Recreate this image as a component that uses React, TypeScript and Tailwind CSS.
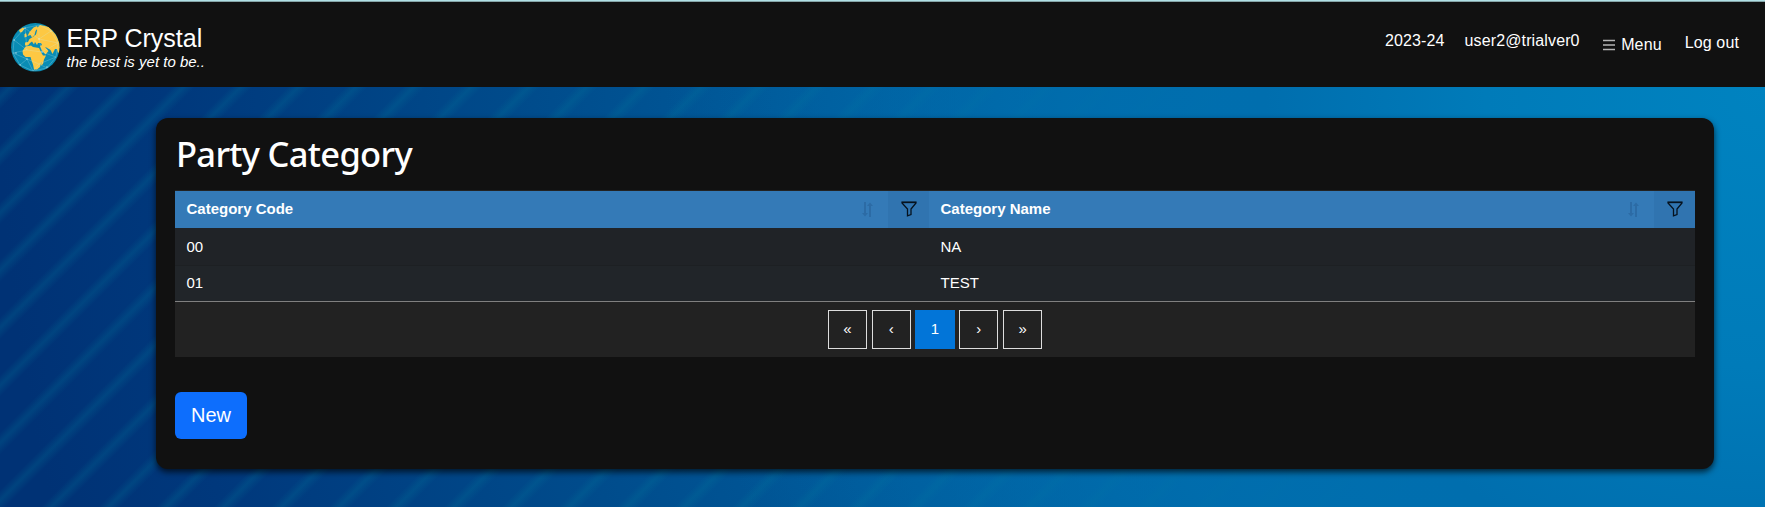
import React from "react";

function Globe() {
  return (
    <svg width="50" height="50" viewBox="0 0 50 50" className="mt-[21px] shrink-0">
      <defs>
        <clipPath id="globe"><circle cx="24.3" cy="24.3" r="24.2" /></clipPath>
      </defs>
      <g clipPath="url(#globe)">
        <rect width="50" height="50" fill="#0a8cb4" />
        <g fill="#fdc843">
          <path d="M8 7l4-2.500 1.500 1L11 9 9 9.500z" />
          <path d="M16.500 13l2-4 4-4.500 3.500-1.500 1 2-2.500 3-1 4-2.500 2.500-1.500-2.500z" />
          <path d="M26 5l3-3 9 2 7 8 4 9v7l-2 2-1-4-2 0-2.500 5-2-4-3-2-2.500-1 3.500 4-3 3.500-3.500-4-2-4.500 2-1-1-2-3 0-1 2-2-3-1 2.500-2-3-2 1.500-2 2.500-3 0 0-3 3-.500 1.500-3 4-2.500 2.500-2 1-4z" />
          <path d="M13.500 11.500l1.500-1.500 1 3.500-2.500 1z" />
          <path d="M11.500 28l3-4.500 5.500-1 2 1.500 6 1 2.500 5 1.500 2.500 3 0-2 4-3 3.500-1 4-3 2.500h-3l-1-5-1.500-4-1-3.500-5 0-2.500-2.500z" />
          <path d="M30.500 38l2.500-2-1 5-2 1.500z" />
          <path d="M45 43l1.500-4 1 1z" />
        </g>
        <g fill="none" stroke="#c9eef2" strokeWidth=".45" opacity=".55">
          <path d="M3 17L14 5 28 2 40 8 47 20 45 34 36 45 22 48 9 42 2 30zM3 17l13 10L14 5l14 11L28 2M16 27L2 30l14 6 6 12M28 16l19 4-16 9-15-2M31 29l14 5-17 7-6 7M16 36l12 5 8 4M40 8L28 16l3 13M9 42l7-6" />
        </g>
        <g fill="#e5fafa" opacity=".75">
          <circle cx="14" cy="5" r=".7" /><circle cx="3" cy="17" r=".7" /><circle cx="16" cy="36" r=".7" />
          <circle cx="28" cy="16" r=".7" /><circle cx="31" cy="29" r=".7" /><circle cx="9" cy="42" r=".7" />
          <circle cx="5" cy="30" r=".7" /><circle cx="36" cy="44" r=".7" /><circle cx="40" cy="8" r=".6" />
        </g>
      </g>
    </svg>
  );
}

function SortIcon() {
  return (
    <svg width="11" height="15" viewBox="0 0 11 15" fill="none" stroke="#2c6ba5" strokeWidth="2">
      <path d="M3 0v12M8 15V3" />
      <path d="M0 11h6l-3 3.500zM5 4h6l-3-3.500z" fill="#2c6ba5" stroke="none" />
    </svg>
  );
}

function FilterIcon() {
  return (
    <svg width="16" height="16" viewBox="0 0 16 16" fill="none" stroke="#06121e" strokeWidth="1.300">
      <path d="M1 1.200h14v.8L10 8v5.500L6.500 14.800V8L1 2z" />
      <path d="M1 1.500h14" />
    </svg>
  );
}

function HeaderCell({ title, width }: { title: string; width: string }) {
  return (
    <div className={`flex h-[37px] items-center ${width}`}>
      <div className="flex-1 pl-[11.5px] font-bold">{title}</div>
      <div className="mr-[15px]"><SortIcon /></div>
      <div className="flex h-full w-[41px] items-center justify-center bg-[#3074b0] pb-[2px]"><FilterIcon /></div>
    </div>
  );
}

const pages = ["«", "‹", "1", "›", "»"];

export default function App() {
  return (
    <div className="flex h-[507px] w-full flex-col overflow-hidden font-['Liberation_Sans',Arial,sans-serif] text-white">
      <div className="h-px shrink-0 bg-[#b0e0e6]" />
      <div className="h-px shrink-0 bg-[#86a5a8]" />
      <header className="flex h-[85px] shrink-0 bg-[#111] pl-[11px] pr-[26px]">
        <div className="flex flex-1">
          <Globe />
          <div className="ml-[5.5px] pt-[22px]">
            <div className="text-[25px] leading-[29px]">ERP Crystal</div>
            <div className="text-[15px] leading-[17px] italic">the best is yet to be..</div>
          </div>
        </div>
        <nav className="flex text-base leading-6 tracking-[0.13px]">
          <span className="mr-[20px] pt-[27px]">2023-24</span>
          <span className="mr-[22px] pt-[27px]">user2@trialver0</span>
          <span className="mr-[23px] flex pt-[31px]">
            <svg width="14" height="12" viewBox="0 0 14 12" className="mt-[6px] mr-[5.5px]">
              <path d="M1 1.500h12M1 6h12M1 10.500h12" stroke="#b5b5b5" strokeWidth="1.700" />
            </svg>
            Menu
          </span>
          <span className="pt-[29px]">Log out</span>
        </nav>
      </header>
      <div className="h-[420px] bg-[radial-gradient(circle_at_1765px_0,#0083c0_0,#007bb9_280px,#006eae_500px,#0066a600_1100px),repeating-linear-gradient(135deg,#00789c00_0,#00789c3c_7px,#00789c3c_8px,#00789c00_16px,#00789c00_40.7px),radial-gradient(circle_at_1765px_0,#0088c6_0,#007bb9_280px,#0066a6_750px,#004b8b_1250px,#00387c_1600px,#003275_1765px)] pt-[31px] pl-[156px]">
        <main className="h-[351px] w-[1558px] rounded-xl bg-[#111] px-[19px] shadow-[0_3px_6px_rgba(0,0,0,0.7)]">
          <h1 className="h-[72px] pt-[14.5px] pl-px font-['Noto_Sans',sans-serif] text-[34.5px] font-medium leading-[42px] tracking-[-0.7px]">Party Category</h1>
          <section className="border-t border-[#222] bg-[#222] text-[15px]">
            <div className="flex bg-[#347ab7]">
              <HeaderCell title="Category Code" width="w-[754px]" />
              <HeaderCell title="Category Name" width="flex-1" />
            </div>
            <div className="flex h-[38px] items-center border-b border-[#1d2023] bg-[#202327] pt-[2px]">
              <div className="w-[754px] pl-[11.5px]">00</div><div className="pl-[11.5px]">NA</div>
            </div>
            <div className="flex h-[35px] items-center bg-[#212529]">
              <div className="w-[754px] pl-[11.5px]">01</div><div className="pl-[11.5px]">TEST</div>
            </div>
            <div className="flex h-[56px] justify-center gap-[4.6px] border-t border-[#808080] pt-2">
              {pages.map((p) => (
                <div key={p} className={`flex h-[39px] w-[39.2px] items-center justify-center border ${p === "1" ? "border-[#0275d8] bg-[#0275d8]" : "border-[#ddd]"}`}>{p}</div>
              ))}
            </div>
          </section>
          <button className="mt-[35px] flex h-[47px] w-[72px] items-center justify-center rounded-md bg-[#0d6efd] pb-px text-xl">New</button>
        </main>
      </div>
    </div>
  );
}
